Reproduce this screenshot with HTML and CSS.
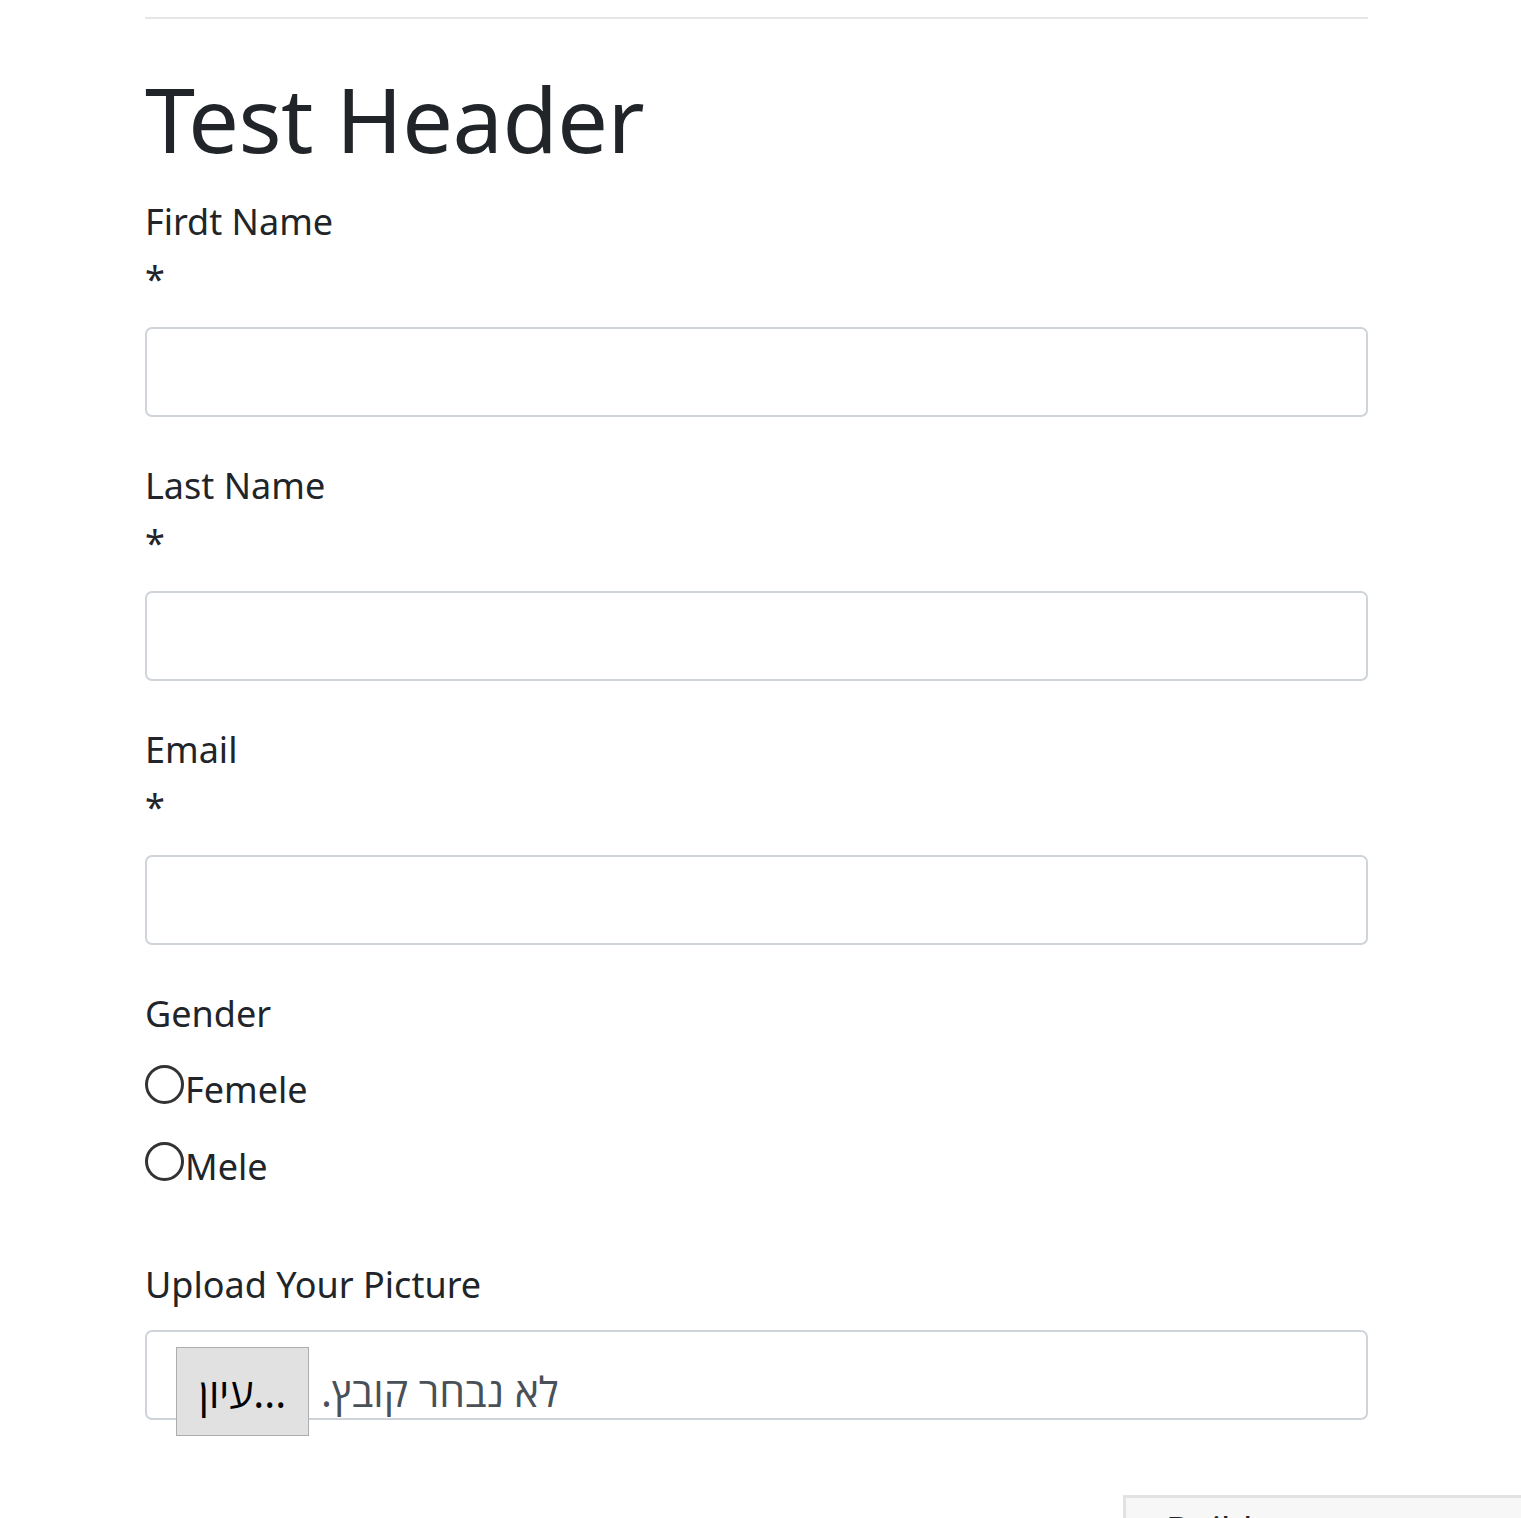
FILE: index.html
```html
<!DOCTYPE html>
<html lang="en">
<head>
<meta charset="utf-8">
<title>Test Header</title>
<link rel="stylesheet" href="styles.css">
</head>
<body>
<div class="container">
  <hr class="rule">
  <h1 class="title">Test Header</h1>
  <form class="form">
    <div class="group">
      <label class="label">Firdt Name</label>
      <div class="req">*</div>
      <input class="control" type="text">
    </div>
    <div class="group">
      <label class="label">Last Name</label>
      <div class="req">*</div>
      <input class="control" type="text">
    </div>
    <div class="group">
      <label class="label">Email</label>
      <div class="req">*</div>
      <input class="control" type="text">
    </div>
    <div class="gender">
      <div class="label">Gender</div>
      <label class="radio-row"><span class="radio"></span>Femele</label>
      <label class="radio-row"><span class="radio"></span>Mele</label>
    </div>
    <div class="upload">
      <div class="label upload-label">Upload Your Picture</div>
      <div class="file-box">
        <span class="file-btn">עיון...</span>
        <span class="file-status" dir="rtl">לא נבחר קובץ.</span>
      </div>
    </div>
  </form>
</div>
<div class="corner-panel"><span class="corner-text">Build</span></div>
</body>
</html>
```
FILE: styles.css
```css
html, body {
  margin: 0;
  padding: 0;
  background: #ffffff;
}
body {
  font-family: "Noto Sans", "Open Sans", "DejaVu Sans", sans-serif;
  color: #212529;
  height: 1518px;
  overflow: hidden;
  position: relative;
}
.container {
  width: 1223px;
  margin-left: 145px;
}
.rule {
  margin: 17px 0 0 0;
  border: 0;
  border-top: 2px solid #e6e6e6;
  height: 0;
}
.title {
  font-size: 90px;
  font-weight: 400;
  line-height: 115px;
  margin: 42px 0 15px 0;
  letter-spacing: -0.5px;
}
.form {
  margin: 0;
}
.label,
.req {
  display: block;
  font-size: 36px;
  padding-top: 4px;
  line-height: 53px;
  height: 53px;
}
.control {
  display: block;
  box-sizing: border-box;
  width: 100%;
  height: 90px;
  margin: 22px 0 38px 0;
  border: 2px solid #ced4da;
  border-radius: 7px;
  background: #fff;
  padding: 0 18px;
}
.gender {
  display: flex;
  flex-direction: column;
  gap: 20px;
}
.radio-row {
  display: flex;
  align-items: center;
  font-size: 36px;
  padding-top: 3px;
  line-height: 54px;
  height: 54px;
}
.radio {
  box-sizing: border-box;
  width: 39px;
  height: 39px;
  border: 3px solid #333333;
  border-radius: 50%;
  margin-top: -12px;
  margin-right: 1px;
  flex: none;
}
.upload {
  margin-top: 60px;
}
.upload-label {
  margin-bottom: 19px;
}
.file-box {
  box-sizing: border-box;
  height: 90px;
  border: 2px solid #ced4da;
  border-radius: 7px;
  display: flex;
  align-items: flex-start;
  padding: 15px 0 0 29px;
}
.file-btn {
  box-sizing: border-box;
  width: 133px;
  height: 89px;
  background: #e1e1e1;
  border: 1px solid #adadad;
  color: #000;
  font-size: 41px;
  line-height: 89px;
  text-align: center;
  flex: none;
}
.file-status {
  color: #495057;
  font-size: 41px;
  line-height: 89px;
  margin-left: 12px;
}
.corner-panel {
  position: absolute;
  left: 1123px;
  top: 1495px;
  width: 420px;
  height: 60px;
  box-sizing: border-box;
  border-top: 3px solid #e2e2e2;
  border-left: 3px solid #e2e2e2;
  background: #f7f7f7;
  padding: 12px 0 0 40px;
}
.corner-text {
  font-size: 36px;
  line-height: 40px;
  color: #212529;
}
```
